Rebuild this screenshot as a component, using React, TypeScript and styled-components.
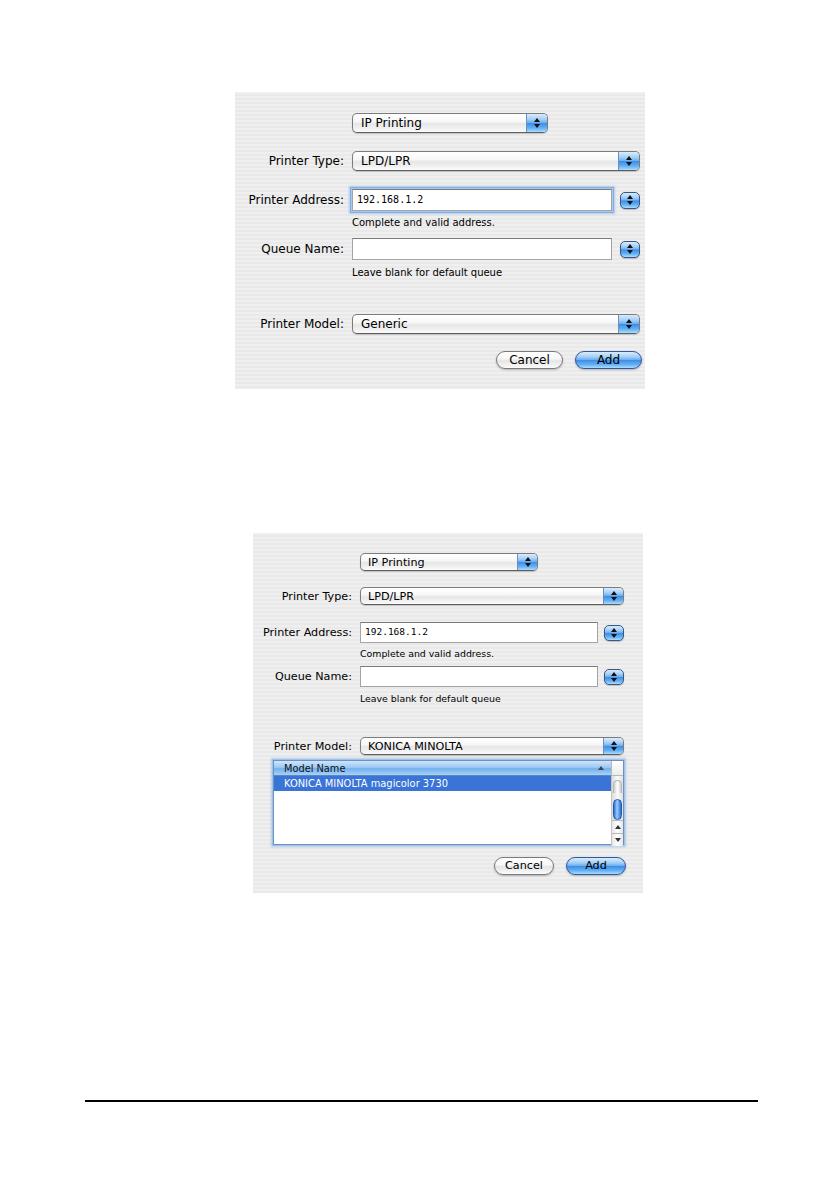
import React from "react";
import styled, { createGlobalStyle, ThemeProvider } from "styled-components";

interface Metrics {
  left: number;
  width: number;
  height: number;
  labelW: number;
  colGap: number;
  ctrlW: number;
  ctrlH: number;
  fieldW: number;
  fieldH: number;
  stepGap: number;
  stepW: number;
  stepH: number;
  fs: number;
  hintFs: number;
  hintLh: number;
  monoFs: number;
  capW: number;
  ipW: number;
  btnW: number;
  btnH: number;
  textPad: number;
}

declare module "styled-components" {
  // eslint-disable-next-line @typescript-eslint/no-empty-interface
  export interface DefaultTheme extends Metrics {}
}

interface Spacing {
  top: number;
  ip: number;
  type: number;
  addr: number;
  hint1: number;
  queue: number;
  hint2: number;
  model: number;
  list: number;
  buttons: number;
}

const topMetrics: Metrics = {
  left: 235,
  width: 410,
  height: 297,
  labelW: 109,
  colGap: 8,
  ctrlW: 288,
  ctrlH: 20,
  fieldW: 260,
  fieldH: 22,
  stepGap: 8,
  stepW: 20,
  stepH: 17,
  fs: 12,
  hintFs: 10,
  hintLh: 14,
  monoFs: 10,
  capW: 20,
  ipW: 196,
  btnW: 67,
  btnH: 18,
  textPad: 9,
};

const bottomMetrics: Metrics = {
  left: 253,
  width: 390,
  height: 360,
  labelW: 99,
  colGap: 8,
  ctrlW: 264,
  ctrlH: 18,
  fieldW: 238,
  fieldH: 21,
  stepGap: 6,
  stepW: 20,
  stepH: 16,
  fs: 11.2,
  hintFs: 9.4,
  hintLh: 13,
  monoFs: 9.5,
  capW: 19,
  ipW: 178,
  btnW: 60,
  btnH: 18,
  textPad: 8,
};

const topSpacing: Spacing = {
  top: 92,
  ip: 21,
  type: 18,
  addr: 18,
  hint1: 5,
  queue: 8,
  hint2: 6,
  model: 34,
  list: 0,
  buttons: 17,
};

const bottomSpacing: Spacing = {
  top: 144,
  ip: 20,
  type: 16,
  addr: 17,
  hint1: 4,
  queue: 6,
  hint2: 5,
  model: 32,
  list: 5,
  buttons: 12,
};

const aquaBlue = `linear-gradient(to bottom, #d8ecfd 0%, #a4cff5 30%, #6eaef0 48%, #3f8de6 52%, #62b0f4 78%, #a9ddff 100%)`;
const aquaWhite = `linear-gradient(to bottom, #ffffff 0%, #f7f7f7 42%, #e6e6e6 55%, #f1f1f1 80%, #fbfbfb 100%)`;

const GlobalStyle = createGlobalStyle`
  html, body {
    margin: 0;
    padding: 0;
    background: #ffffff;
  }
  body {
    font-family: "DejaVu Sans", Verdana, sans-serif;
    color: #000;
  }
`;

const Page = styled.div`
  display: flex;
  flex-direction: column;
  align-items: flex-start;
  min-height: 1193px;
  box-sizing: border-box;
`;

const Sheet = styled.div<{ $mt: number }>`
  display: flex;
  flex-direction: column;
  margin-top: ${p => p.$mt}px;
  margin-left: ${p => p.theme.left}px;
  width: ${p => p.theme.width}px;
  height: ${p => p.theme.height}px;
  box-sizing: border-box;
  background: repeating-linear-gradient(
    to bottom,
    #efefef 0px,
    #efefef 2px,
    #e9e9e9 2px,
    #e9e9e9 4px
  );
`;

const Row = styled.div<{ $mt: number }>`
  display: grid;
  grid-template-columns: ${p => p.theme.labelW}px ${p => p.theme.ctrlW}px;
  column-gap: ${p => p.theme.colGap}px;
  align-items: center;
  margin-top: ${p => p.$mt}px;
`;

const Label = styled.span`
  text-align: right;
  font-size: ${p => p.theme.fs}px;
  line-height: 15px;
  white-space: nowrap;
`;

const Control = styled.div`
  display: flex;
  align-items: center;
  gap: ${p => p.theme.stepGap}px;
`;

const PopUp = styled.div<{ $w?: number }>`
  display: flex;
  align-items: stretch;
  width: ${p => (p.$w ? `${p.$w}px` : "100%")};
  height: ${p => p.theme.ctrlH}px;
  box-sizing: border-box;
  border: 1px solid #7c7c7c;
  border-bottom-color: #5e5e5e;
  border-radius: 5px;
  background: ${aquaWhite};
  box-shadow: 0 1px 1px rgba(0, 0, 0, 0.18);
  overflow: hidden;
`;

const PopUpText = styled.span`
  flex: 1;
  display: flex;
  align-items: center;
  padding-left: ${p => p.theme.textPad - 1}px;
  font-size: ${p => p.theme.fs}px;
  white-space: nowrap;
`;

const ArrowCap = styled.span`
  width: ${p => p.theme.capW}px;
  display: flex;
  flex-direction: column;
  align-items: center;
  justify-content: center;
  gap: 2px;
  border-left: 1px solid #6b8fc4;
  background: ${aquaBlue};
`;

const Tri = styled.span<{ $down?: boolean; $color?: string }>`
  width: 0;
  height: 0;
  border-left: 3px solid transparent;
  border-right: 3px solid transparent;
  ${p =>
    p.$down
      ? `border-top: 4px solid ${p.$color || "#111"};`
      : `border-bottom: 4px solid ${p.$color || "#111"};`}
`;

const Stepper = styled.span`
  display: flex;
  flex-direction: column;
  align-items: center;
  justify-content: center;
  gap: 2px;
  width: ${p => p.theme.stepW}px;
  height: ${p => p.theme.stepH}px;
  box-sizing: border-box;
  border: 1px solid #3b5684;
  border-radius: 5px;
  background: ${aquaBlue};
  box-shadow: 0 1px 1px rgba(0, 0, 0, 0.2);
`;

const TextField = styled.div<{ $focused?: boolean }>`
  display: flex;
  align-items: center;
  width: ${p => p.theme.fieldW}px;
  height: ${p => p.theme.fieldH}px;
  box-sizing: border-box;
  padding: 0 0 2px 4px;
  background: #fff;
  border: 1px solid #a4a4a4;
  border-top-color: #7a7a7a;
  font-family: "DejaVu Sans Mono", "Liberation Mono", monospace;
  font-size: ${p => p.theme.monoFs}px;
  ${p =>
    p.$focused &&
    `box-shadow: 0 0 0 1px #a9c8ee, 0 0 0 2px #7faee6, 0 0 2px 3px rgba(130, 175, 230, 0.55);`}
`;

const Hint = styled.div<{ $mt: number }>`
  margin-top: ${p => p.$mt}px;
  margin-left: ${p => p.theme.labelW + p.theme.colGap}px;
  font-size: ${p => p.theme.hintFs}px;
  line-height: ${p => p.theme.hintLh}px;
  white-space: nowrap;
`;

const ButtonBar = styled.div<{ $mt: number }>`
  display: flex;
  justify-content: flex-end;
  gap: 12px;
  margin-top: ${p => p.$mt}px;
  width: ${p => p.theme.labelW + p.theme.colGap + p.theme.ctrlW + 2}px;
`;

const PushButton = styled.button<{ $default?: boolean }>`
  width: ${p => p.theme.btnW}px;
  height: ${p => p.theme.btnH}px;
  padding: 0;
  box-sizing: border-box;
  border-radius: ${p => p.theme.btnH / 2}px;
  border: 1px solid ${p => (p.$default ? "#31589a" : "#7a7a7a")};
  background: ${p => (p.$default ? aquaBlue : aquaWhite)};
  box-shadow: 0 1px 2px rgba(0, 0, 0, 0.25);
  font-family: "DejaVu Sans", Verdana, sans-serif;
  font-size: ${p => p.theme.fs}px;
  line-height: 1;
  color: #000;
`;

const ListBox = styled.div<{ $mt: number }>`
  display: grid;
  grid-template-columns: 1fr 12px;
  grid-template-rows: 15px 1fr;
  margin-top: ${p => p.$mt}px;
  margin-left: 20px;
  width: 351px;
  height: 85px;
  box-sizing: border-box;
  background: #fff;
  border: 1px solid #6f8fbf;
  box-shadow: 0 0 0 1px #9cc2ee, 0 0 2px 2px rgba(120, 170, 230, 0.5);
`;

const ColumnHeader = styled.div`
  display: flex;
  align-items: center;
  justify-content: space-between;
  padding: 0 7px 0 10px;
  border-bottom: 1px solid #5d86c0;
  background: linear-gradient(to bottom, #cfe5fb 0%, #9ccaf4 45%, #74b0ee 55%, #a7d3f7 100%);
  font-size: 9.8px;
  color: #111;
`;

const HeaderCorner = styled.div`
  border-left: 1px solid #b9b9b9;
  border-bottom: 1px solid #b9b9b9;
  background: linear-gradient(to bottom, #ffffff, #ececec);
`;

const Rows = styled.div`
  display: flex;
  flex-direction: column;
`;

const ListRow = styled.div<{ $selected?: boolean }>`
  height: 15px;
  display: flex;
  align-items: center;
  padding-left: 10px;
  font-size: 9.9px;
  white-space: nowrap;
  background: ${p => (p.$selected ? "#3a74d7" : "transparent")};
  color: ${p => (p.$selected ? "#fff" : "#000")};
`;

const ScrollTrack = styled.div`
  display: flex;
  flex-direction: column;
  align-items: stretch;
  border-left: 1px solid #c4c4c4;
  background: linear-gradient(to right, #dcdcdc, #f9f9f9 50%, #e2e2e2);
`;

const TrackCap = styled.div`
  height: 12px;
  margin: 4px 1px 0;
  border: 1px solid #b4b4b4;
  border-bottom: none;
  border-radius: 6px 6px 0 0;
  background: linear-gradient(to right, #cfcfcf, #ffffff 50%, #cfcfcf);
`;

const Thumb = styled.div`
  height: 19px;
  margin: 6px 1px 0;
  border: 1px solid #2a55a0;
  border-radius: 5px;
  background: linear-gradient(to right, #2f72da, #9fd0ff 45%, #5a9ff0 70%, #2f72da);
`;

const TrackFill = styled.div`
  flex: 1;
`;

const ScrollArrow = styled.div`
  height: 12px;
  display: flex;
  align-items: center;
  justify-content: center;
  border-top: 1px solid #b8b8b8;
  background: linear-gradient(to right, #e6e6e6, #ffffff 50%, #e6e6e6);
`;

const Rule = styled.div`
  margin-top: 207px;
  margin-left: 85px;
  width: 673px;
  height: 2px;
  background: #000;
`;

const SelectArrows = () => (
  <>
    <Tri />
    <Tri $down />
  </>
);

interface DialogProps {
  metrics: Metrics;
  spacing: Spacing;
  model: string;
  focusAddress?: boolean;
  showList?: boolean;
}

const PrinterDialog = ({ metrics, spacing, model, focusAddress, showList }: DialogProps) => (
  <ThemeProvider theme={metrics}>
    <Sheet $mt={spacing.top}>
      <Row $mt={spacing.ip}>
        <span />
        <PopUp $w={metrics.ipW}>
          <PopUpText>IP Printing</PopUpText>
          <ArrowCap>
            <SelectArrows />
          </ArrowCap>
        </PopUp>
      </Row>

      <Row $mt={spacing.type}>
        <Label>Printer Type:</Label>
        <PopUp>
          <PopUpText>LPD/LPR</PopUpText>
          <ArrowCap>
            <SelectArrows />
          </ArrowCap>
        </PopUp>
      </Row>

      <Row $mt={spacing.addr}>
        <Label>Printer Address:</Label>
        <Control>
          <TextField $focused={focusAddress}>192.168.1.2</TextField>
          <Stepper>
            <SelectArrows />
          </Stepper>
        </Control>
      </Row>
      <Hint $mt={spacing.hint1}>Complete and valid address.</Hint>

      <Row $mt={spacing.queue}>
        <Label>Queue Name:</Label>
        <Control>
          <TextField />
          <Stepper>
            <SelectArrows />
          </Stepper>
        </Control>
      </Row>
      <Hint $mt={spacing.hint2}>Leave blank for default queue</Hint>

      <Row $mt={spacing.model}>
        <Label>Printer Model:</Label>
        <PopUp>
          <PopUpText>{model}</PopUpText>
          <ArrowCap>
            <SelectArrows />
          </ArrowCap>
        </PopUp>
      </Row>

      {showList && (
        <ListBox $mt={spacing.list}>
          <ColumnHeader>
            <span>Model Name</span>
            <Tri $color="#3b4656" />
          </ColumnHeader>
          <HeaderCorner />
          <Rows>
            <ListRow $selected>KONICA MINOLTA magicolor 3730</ListRow>
          </Rows>
          <ScrollTrack>
            <TrackCap />
            <Thumb />
            <TrackFill />
            <ScrollArrow>
              <Tri $color="#333" />
            </ScrollArrow>
            <ScrollArrow>
              <Tri $down $color="#333" />
            </ScrollArrow>
          </ScrollTrack>
        </ListBox>
      )}

      <ButtonBar $mt={spacing.buttons}>
        <PushButton>Cancel</PushButton>
        <PushButton $default>Add</PushButton>
      </ButtonBar>
    </Sheet>
  </ThemeProvider>
);

export default function App() {
  return (
    <>
      <GlobalStyle />
      <Page>
        <PrinterDialog metrics={topMetrics} spacing={topSpacing} model="Generic" focusAddress />
        <PrinterDialog
          metrics={bottomMetrics}
          spacing={bottomSpacing}
          model="KONICA MINOLTA"
          showList
        />
        <Rule />
      </Page>
    </>
  );
}
